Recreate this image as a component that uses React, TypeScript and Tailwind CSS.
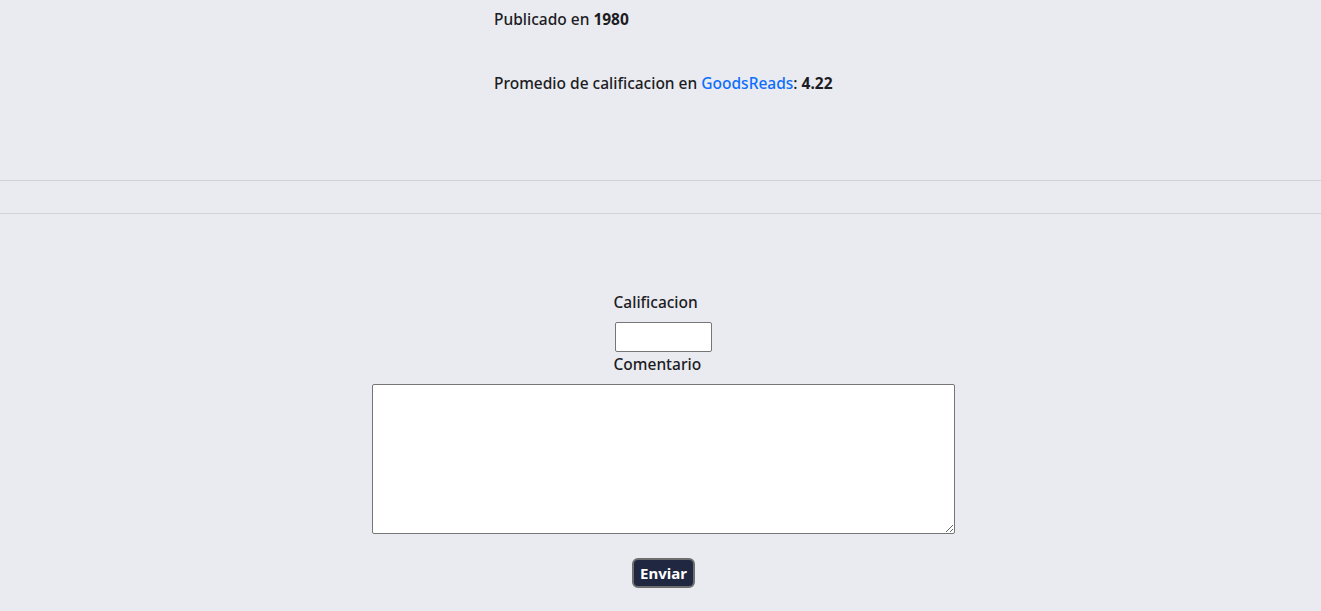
export default function App() {
  return (
    <div className="min-h-[611px] bg-[#eaebf0] text-[#1c1c24] text-[15.5px] font-medium" style={{ fontFamily: '"Noto Sans", "Open Sans", sans-serif' }}>
      <div className="pl-[494px] pt-[7px]">
        <p className="leading-[24px]">
          Publicado en <b className="font-bold">1980</b>
        </p>
        <p className="leading-[24px] mt-[40px]">
          Promedio de calificacion en <a href="#" className="text-[#0d6efd]">GoodsReads</a>: <b className="font-bold">4.22</b>
        </p>
      </div>

      <hr className="mt-[85px] border-t border-[#d2d3d8]" />
      <hr className="mt-[32px] border-t border-[#d2d3d8]" />

      <form className="flex flex-col items-center pl-[6px] pt-[76px]" onSubmit={(e) => e.preventDefault()}>
        <div className="w-[100px] flex flex-col">
          <label className="leading-[24px]">Calificacion</label>
          <input type="text" className="mt-[8px] ml-px w-[97px] h-[30px] bg-white border border-[#767676] rounded-[2px]" />
          <label className="leading-[24px]">Comentario</label>
        </div>
        <textarea className="mt-[8px] w-[583px] h-[150px] bg-white border border-[#767676] rounded-[2px]" />
        <button type="submit" className="mt-[24px] h-[30px] px-[6px] bg-[#1f2741] text-white text-[15px] font-bold rounded-[6px] border-2 border-[#6e6e6e] leading-none">
          Enviar
        </button>
      </form>
    </div>
  );
}
